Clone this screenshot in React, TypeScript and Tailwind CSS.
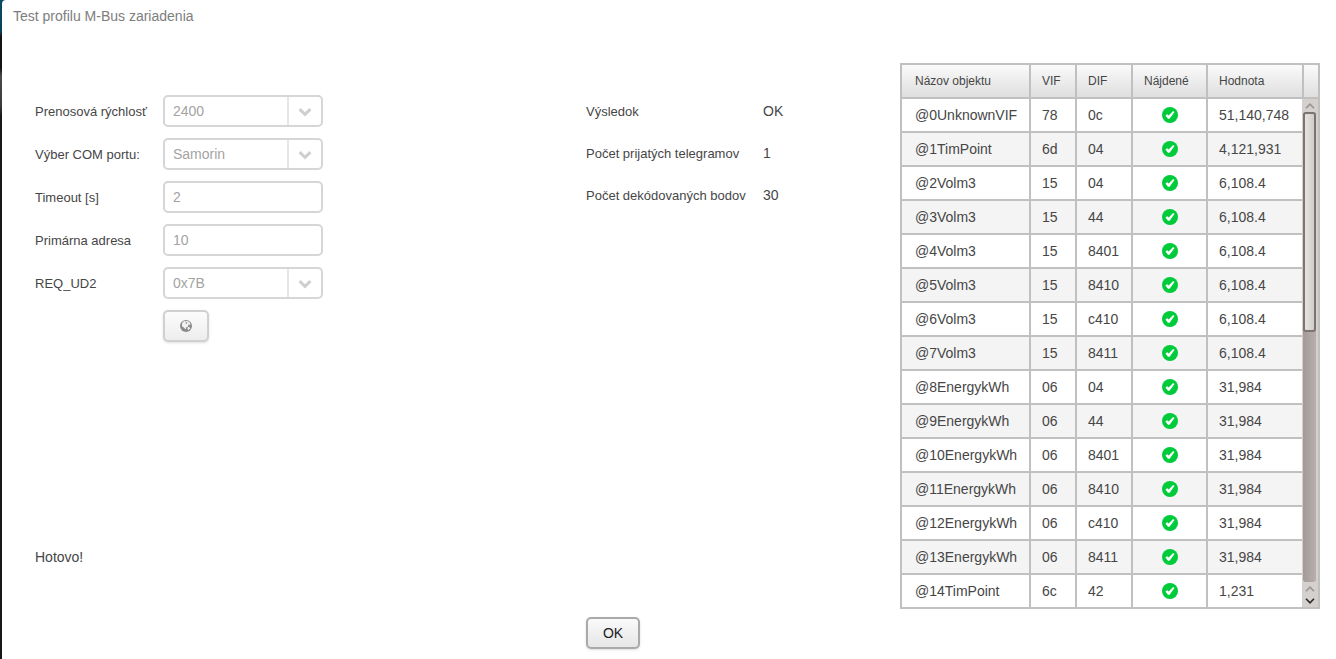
import React from "react";

type Point = { name: string; vif: string; dif: string; value: string };

const points: Point[] = [
  { name: "@0UnknownVIF", vif: "78", dif: "0c", value: "51,140,748" },
  { name: "@1TimPoint", vif: "6d", dif: "04", value: "4,121,931" },
  { name: "@2Volm3", vif: "15", dif: "04", value: "6,108.4" },
  { name: "@3Volm3", vif: "15", dif: "44", value: "6,108.4" },
  { name: "@4Volm3", vif: "15", dif: "8401", value: "6,108.4" },
  { name: "@5Volm3", vif: "15", dif: "8410", value: "6,108.4" },
  { name: "@6Volm3", vif: "15", dif: "c410", value: "6,108.4" },
  { name: "@7Volm3", vif: "15", dif: "8411", value: "6,108.4" },
  { name: "@8EnergykWh", vif: "06", dif: "04", value: "31,984" },
  { name: "@9EnergykWh", vif: "06", dif: "44", value: "31,984" },
  { name: "@10EnergykWh", vif: "06", dif: "8401", value: "31,984" },
  { name: "@11EnergykWh", vif: "06", dif: "8410", value: "31,984" },
  { name: "@12EnergykWh", vif: "06", dif: "c410", value: "31,984" },
  { name: "@13EnergykWh", vif: "06", dif: "8411", value: "31,984" },
  { name: "@14TimPoint", vif: "6c", dif: "42", value: "1,231" },
];

const results = [
  { label: "Výsledok", value: "OK" },
  { label: "Počet prijatých telegramov", value: "1" },
  { label: "Počet dekódovaných bodov", value: "30" },
];

function SelectField({ id, label, value }: { id: string; label: string; value: string }) {
  return (
    <div className="flex h-8 items-center">
      <label htmlFor={id} className="w-32 pt-0.5 text-[13px]">{label}</label>
      <div className="flex h-8 w-40 rounded-[5px] border-2 border-[#d6d6d6] bg-white">
        <select
          id={id}
          disabled
          className="min-w-0 flex-1 appearance-none border-r-2 border-[#e6e6e6] bg-transparent px-2 text-sm text-[#a3a3a3] disabled:opacity-100"
        >
          <option>{value}</option>
        </select>
        <span className="flex w-8 items-center justify-center pt-0.5">
          <svg width="14" height="10" viewBox="0 0 14 10" fill="none" stroke="#cfcfcf" strokeWidth="3" aria-hidden="true">
            <path d="M1.6 2.2 7 7.4l5.4-5.2" />
          </svg>
        </span>
      </div>
    </div>
  );
}

function TextField({ id, label, value }: { id: string; label: string; value: string }) {
  return (
    <div className="flex h-8 items-center">
      <label htmlFor={id} className="w-32 pt-0.5 text-[13px]">{label}</label>
      <input
        id={id}
        disabled
        defaultValue={value}
        className="h-8 w-40 rounded-[5px] border-2 border-[#d6d6d6] bg-white px-2 text-sm text-[#a3a3a3]"
      />
    </div>
  );
}

function GlobeIcon() {
  return (
    <svg width="12" height="12" viewBox="0 0 12 12" aria-hidden="true">
      <circle cx="6" cy="6" r="6" fill="#8b8b8b" />
      <path
        d="M2.6 2.2 4.4 1l1.2.5.9-.6 1.6.4 1.6 1.3.8 1.6-.7.7-1.1-.5-.8.6.5.9-1 1.1-1.5.6.2 1.2-.9.2-1.3-1.6-1.5-.7-.5-1.5.3-1.6z"
        fill="#f2f2f2"
      />
      <path d="m8.1 6.9 1.7.5.5.8-1.6 1.7-.9-.4-.3-1.4z" fill="#f2f2f2" />
      <path d="m5.6 2.6 1.2-.4.8.6-.9.9-1 .1z" fill="#8b8b8b" />
    </svg>
  );
}

function FoundIcon() {
  return (
    <svg className="mx-auto block" width="16" height="16" viewBox="0 0 16 16" role="img" aria-label="Nájdené">
      <circle cx="8" cy="8" r="8" fill="#00cb3b" />
      <path d="M3.4 8.6 5.2 7.2l1.5 1.2 4.4-4.5 1.4 1-4.9 6.8-1.6.1z" fill="#fff" />
    </svg>
  );
}

function Arrow({ up, color }: { up?: boolean; color: string }) {
  return (
    <svg width="10" height="6" viewBox="0 0 10 6" fill="none" stroke={color} strokeWidth="1.6" aria-hidden="true">
      <path d={up ? "M1 5.2 5 1.2l4 4" : "M1 .8l4 4 4-4"} />
    </svg>
  );
}

function ScrollBar() {
  return (
    <div className="flex h-[508px] flex-col bg-[#d4d0cd] pl-px pr-0.5">
      <div className="flex h-[13px] items-center justify-center"><Arrow up color="#9a9491" /></div>
      <div className="flex flex-1 flex-col rounded-[3px] bg-gradient-to-r from-[#a39a97] to-[#b8afac]">
        <div className="h-[220px] rounded-[3px] border-2 border-[#7b7471] bg-gradient-to-r from-[#e6e3e1] to-[#d0ccc9]" />
      </div>
      <div className="flex h-[13px] items-center justify-center"><Arrow up color="#9a9491" /></div>
      <div className="flex h-3 items-center justify-center"><Arrow color="#2b2b2b" /></div>
    </div>
  );
}

const head = "border-b-2 border-r-2 border-[#c0c0c0] bg-gradient-to-b from-[#fafafa] to-[#dfdfdf] p-0 text-left text-xs font-normal";
const cell = "border-b-2 border-r-2 border-[#c0c0c0] p-0 pl-[11px]";

function PointsTable() {
  return (
    <table className="w-full table-fixed border-separate border-spacing-0 border-l-2 border-t-2 border-[#c0c0c0] text-sm">
      <colgroup>
        <col className="w-[129px]" />
        <col className="w-[46px]" />
        <col className="w-14" />
        <col className="w-[75px]" />
        <col />
        <col className="w-[18px]" />
      </colgroup>
      <thead>
        <tr className="h-[34px]">
          <th className={`${head} pl-[13px]`}>Názov objektu</th>
          <th className={`${head} pl-[11px]`}>VIF</th>
          <th className={`${head} pl-[11px]`}>DIF</th>
          <th className={`${head} pl-[11px]`}>Nájdené</th>
          <th className="border-b-2 border-[#c0c0c0] bg-gradient-to-b from-[#fafafa] to-[#dfdfdf] p-0 pl-[11px] text-left text-xs font-normal">Hodnota</th>
          <th className={`${head} border-l-2`} />
        </tr>
      </thead>
      <tbody>
        {points.map((p, i) => (
          <tr key={p.name} className="h-[34px] even:bg-[#f4f4f4]">
            <td className="border-b-2 border-r-2 border-[#c0c0c0] p-0 pl-[13px]">{p.name}</td>
            <td className={cell}>{p.vif}</td>
            <td className={cell}>{p.dif}</td>
            <td className="border-b-2 border-r-2 border-[#c0c0c0] p-0"><FoundIcon /></td>
            <td className="border-b-2 border-[#c0c0c0] p-0 pl-[11px]">{p.value}</td>
            {i === 0 && (
              <td rowSpan={points.length} className="border-b-2 border-r-2 border-[#c0c0c0] p-0 align-top">
                <ScrollBar />
              </td>
            )}
          </tr>
        ))}
      </tbody>
    </table>
  );
}

export default function App() {
  return (
    <div className="flex min-h-screen bg-[linear-gradient(#0b4a66_0,#0b3f58_32px,#131315_36px,#131315_68px,#4a4a4c_76px,#3a3a3c_106px,#17181b_116px)] pl-0.5 font-['Liberation_Sans',Arial,sans-serif] text-[#464646]">
      <div className="flex-1 rounded-tl-[4px] bg-white">
        <h1 className="px-[11px] pt-1.5 text-sm text-[#7d7d7d]">Test profilu M-Bus zariadenia</h1>
        <main className="grid grid-cols-[551fr_314fr_420px] gap-y-2 pl-[33px] pr-4 pt-[37px]">
          <form className="flex flex-col justify-between pb-[42px] pt-8">
            <div className="flex flex-col gap-[11px]">
              <SelectField id="baud" label="Prenosová rýchlosť" value="2400" />
              <SelectField id="port" label="Výber COM portu:" value="Samorin" />
              <TextField id="timeout" label="Timeout [s]" value="2" />
              <TextField id="address" label="Primárna adresa" value="10" />
              <SelectField id="request" label="REQ_UD2" value="0x7B" />
              <button
                type="button"
                disabled
                aria-label="Test"
                className="ml-32 flex h-8 w-[46px] items-center justify-center rounded-[5px] border-2 border-[#d0d0d0] bg-gradient-to-b from-[#fcfcfc] to-[#ededed] shadow-sm"
              >
                <GlobeIcon />
              </button>
            </div>
            <p className="text-sm">Hotovo!</p>
          </form>
          <dl className="flex flex-col gap-[22px] pt-[38px]">
            {results.map((r) => (
              <div key={r.label} className="flex h-5 items-center">
                <dt className="w-[177px] pt-0.5 text-[13px]">{r.label}</dt>
                <dd className="text-sm">{r.value}</dd>
              </div>
            ))}
          </dl>
          <PointsTable />
          <button
            type="button"
            className="col-start-2 h-8 w-[54px] rounded-[5px] border-2 border-[#a9a9a9] bg-gradient-to-b from-[#fafafa] to-[#e6e6e6] text-sm text-[#202020] shadow-sm"
          >
            OK
          </button>
        </main>
      </div>
    </div>
  );
}
